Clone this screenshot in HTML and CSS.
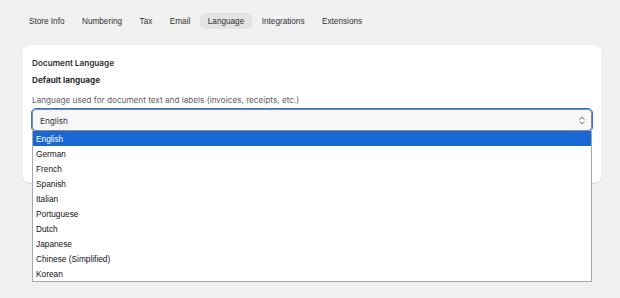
FILE: index.html
```html
<!DOCTYPE html>
<html lang="en">
<head>
  <meta charset="UTF-8">
  <title>Settings - Language</title>
  <link rel="stylesheet" href="styles.css">
</head>
<body>
  <nav class="tabs">
    <a class="tab">Store Info</a>
    <a class="tab">Numbering</a>
    <a class="tab">Tax</a>
    <a class="tab">Email</a>
    <a class="tab active">Language</a>
    <a class="tab">Integrations</a>
    <a class="tab">Extensions</a>
  </nav>

  <div class="card">
    <h2 class="card-title">Document Language</h2>
    <h3 class="field-label">Default language</h3>
    <p class="field-help">Language used for document text and labels (invoices, receipts, etc.)</p>

    <div class="field">
      <div class="select">
        <span>English</span>
        <svg class="chevron" width="6" height="9" viewBox="0 0 6 9">
          <path d="M1 3.2 L3 1.2 L5 3.2 M1 5.8 L3 7.8 L5 5.8" fill="none" stroke="#4a4a4a" stroke-width="0.9" stroke-linecap="round" stroke-linejoin="round"/>
        </svg>
      </div>

      <!-- open dropdown -->
      <ul class="options">
        <li class="selected">English</li>
        <li>German</li>
        <li>French</li>
        <li>Spanish</li>
        <li>Italian</li>
        <li>Portuguese</li>
        <li>Dutch</li>
        <li>Japanese</li>
        <li>Chinese (Simplified)</li>
        <li>Korean</li>
      </ul>
    </div>
  </div>
</body>
</html>
```

FILE: styles.css
```css
html, body {
  min-height: 100%;
  height: 100%;
}

body {
  margin: 0;
  background-color: #f1f1f1;
  font-family: Inter, "Noto Sans", sans-serif;
  color: #303030;
  font-size: 8.2px;
}

.tabs {
  display: flex;
  gap: 1.5px;
  padding: 13px 0 0 21px;
  font-family: "Liberation Sans", Arial, sans-serif;
  font-size: 8.2px;
}

.tab {
  height: 16px;
  line-height: 17px;
  padding: 0 8px;
  border-radius: 5px;
  color: #303030;
  cursor: pointer;
}

.tab.active {
  background-color: #e3e3e3;
}

.card {
  margin: 16px 18px 0 22px;
  background-color: white;
  border-radius: 8px;
  padding: 12px 10px 52px;
  box-shadow: 0 1px 0 rgba(0, 0, 0, 0.06), 0 0 0 1px rgba(0, 0, 0, 0.03);
}

.card-title {
  margin: 0;
  font-size: 8.2px;
  line-height: 12px;
  font-weight: 600;
}

.field-label {
  margin: 5px 0 0;
  font-size: 8.2px;
  line-height: 12px;
  font-weight: 700;
}

.field-help {
  margin: 8px 0 0;
  line-height: 12px;
  color: #616161;
}

.field {
  position: relative;
  margin-top: 3px;
}

.select {
  display: flex;
  align-items: center;
  justify-content: space-between;
  height: 19px;
  padding: 1px 6px 0 7px;
  background-color: #f7f7f7;
  border: 1px solid #8a8a8a;
  border-radius: 4px;
  outline: 1.5px solid #2f72e6;
  outline-offset: 0;
}

.chevron {
  display: block;
}

.options {
  position: absolute;
  top: 22px;
  left: 0;
  right: 0;
  z-index: 10;
  margin: 0;
  padding: 0;
  list-style: none;
  background-color: white;
  border: 1px solid #a9a9a9;
  border-top: none;
  font-family: "Liberation Sans", Arial, sans-serif;
  font-size: 8.3px;
  color: #111;
}

.options li {
  height: 15px;
  line-height: 16px;
  padding-left: 3px;
}

.options li.selected {
  background-color: #1967d2;
  color: white;
}
```
